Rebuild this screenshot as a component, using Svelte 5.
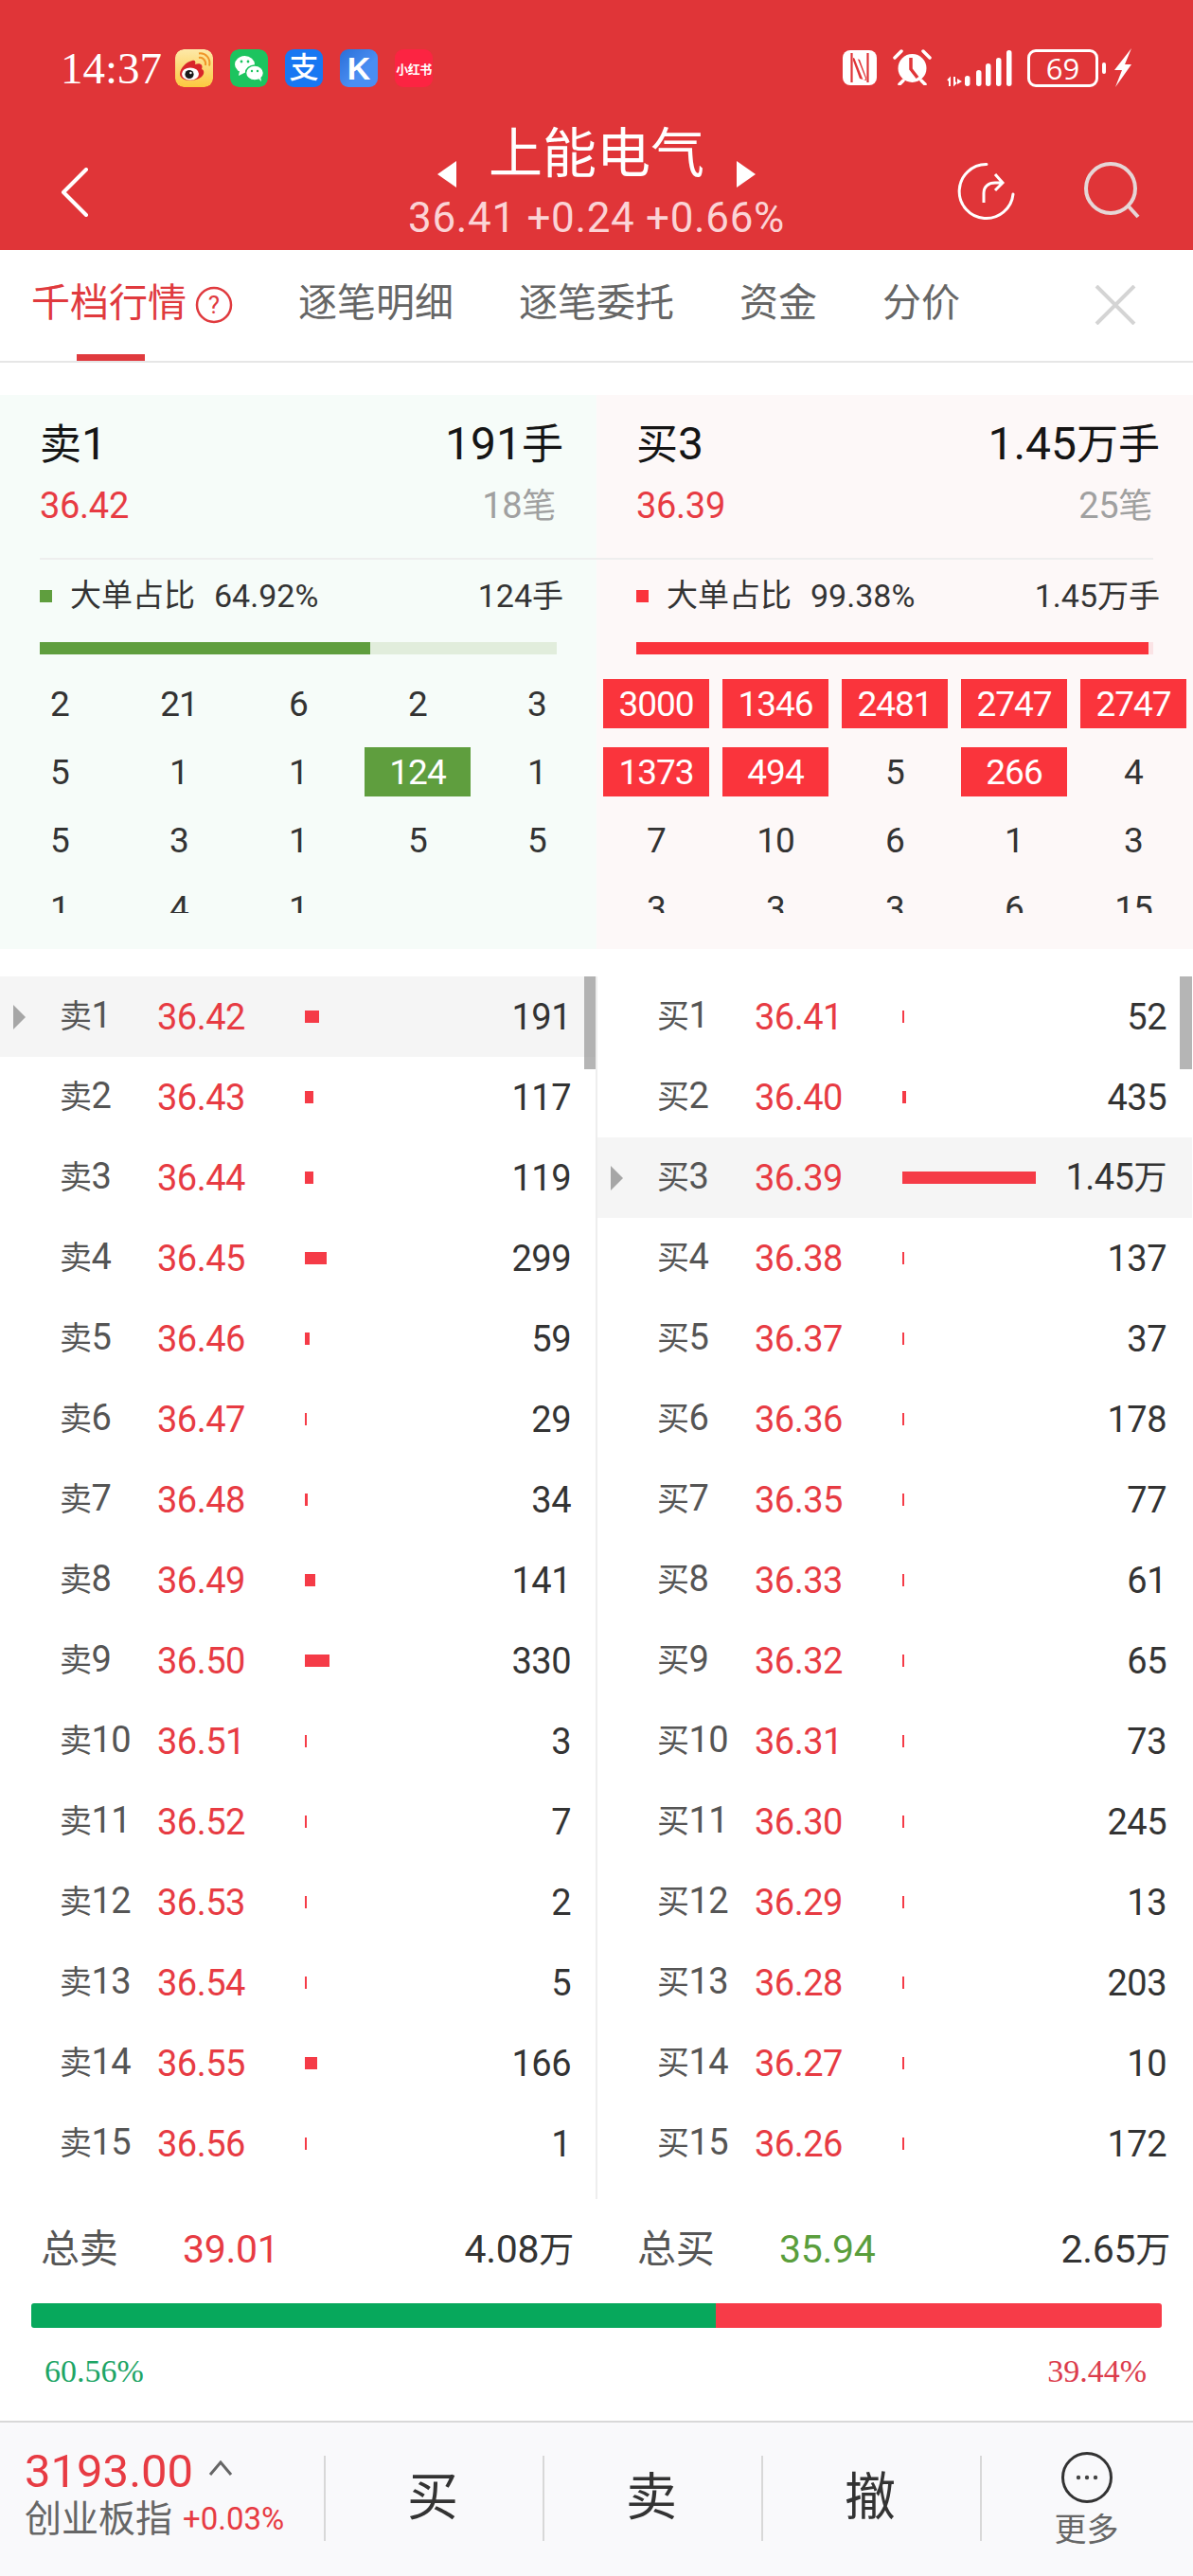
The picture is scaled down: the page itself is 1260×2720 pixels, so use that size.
<script>
  const prices = {
    sell: ['36.42', '36.43', '36.44', '36.45', '36.46', '36.47', '36.48', '36.49', '36.50', '36.51', '36.52', '36.53', '36.54', '36.55', '36.56'],
    buy: ['36.41', '36.40', '36.39', '36.38', '36.37', '36.36', '36.35', '36.33', '36.32', '36.31', '36.30', '36.29', '36.28', '36.27', '36.26']
  };
  const sellQty = [191, 117, 119, 299, 59, 29, 34, 141, 330, 3, 7, 2, 5, 166, 1];
  const buyQty = [52, 435, 14500, 137, 37, 178, 77, 61, 65, 73, 245, 13, 203, 10, 172];

  const fmt = q => (q >= 10000 ? (q / 10000).toFixed(2) + '万' : String(q));

  // digits are set a bit larger than the han characters next to them
  const parts = s => s.match(/[\u4e00-\u9fff]+|[^\u4e00-\u9fff]+/g);
  const isHan = t => /[\u4e00-\u9fff]/.test(t);

  const columns = [
    { label: '卖', rows: sellQty, px: prices.sell, active: 0, scale: 0.078 },
    { label: '买', rows: buyQty, px: prices.buy, active: 2, scale: 0.00972 }
  ];

  const panels = [
    {
      cls: 'sell', title: '卖1', hands: '191手', price: '36.42', count: '18笔',
      pct: '64.92%', big: '124手', fill: 64,
      cells: [2, 21, 6, 2, 3, 5, 1, 1, 124, 1, 5, 3, 1, 5, 5, 1, 4, 1],
      hot: [124]
    },
    {
      cls: 'buy', title: '买3', hands: '1.45万手', price: '36.39', count: '25笔',
      pct: '99.38%', big: '1.45万手', fill: 99.1,
      cells: [3000, 1346, 2481, 2747, 2747, 1373, 494, 5, 266, 4, 7, 10, 6, 1, 3, 3, 3, 3, 6, 15],
      hot: [3000, 1346, 2481, 2747, 1373, 494, 266]
    }
  ];

  const tabs = ['逐笔明细', '逐笔委托', '资金', '分价'];
</script>

{#snippet mix(s)}
  <span>{#each parts(s) as t}<span class:han={isHan(t)}>{t}</span>{/each}</span>
{/snippet}

<div class="page">
  <header class="top">
    <div class="status">
      <span class="time">14:37</span>
      <div class="apps">
        <svg class="app" viewBox="0 0 40 40">
          <defs>
            <linearGradient id="wb" x1="0" y1="0" x2="0" y2="1">
              <stop offset="0" stop-color="#fde9a8" />
              <stop offset="1" stop-color="#fcc93f" />
            </linearGradient>
          </defs>
          <rect width="40" height="40" rx="9" fill="url(#wb)" />
          <path d="M5 26c0-6 7-13 13-14 3-1 4 1 3 4 5-2 9 0 7 5 3 1 3 5 0 8-5 5-23 6-23-3z" fill="#d9262a" />
          <ellipse cx="16" cy="26" rx="9" ry="6.6" fill="#fff" />
          <circle cx="15" cy="26.5" r="4.6" fill="#1a1a1a" />
          <circle cx="16.4" cy="25" r="1.2" fill="#fff" />
          <path d="M25 9c4-1 8 3 7 8M25 4.500c7-1 13 5 11 13" fill="none" stroke="#f0962a" stroke-width="2" />
        </svg>
        <svg class="app" viewBox="0 0 40 40">
          <rect width="40" height="40" rx="9" fill="#1cc45f" />
          <ellipse cx="15.500" cy="16" rx="10.500" ry="9" fill="#fff" />
          <path d="M10 23l-1 5 6-3z" fill="#fff" />
          <ellipse cx="26" cy="25" rx="9.500" ry="8" fill="#fff" stroke="#1cc45f" stroke-width="1.500" />
          <path d="M30 31l3 3-1-6z" fill="#fff" />
          <circle cx="12" cy="13" r="1.400" fill="#1cc45f" />
          <circle cx="19" cy="13" r="1.400" fill="#1cc45f" />
          <circle cx="23" cy="23" r="1.200" fill="#1cc45f" />
          <circle cx="29" cy="23" r="1.200" fill="#1cc45f" />
        </svg>
        <span class="app pay">支</span>
        <span class="app kk">K</span>
        <span class="app xhs">小红书</span>
      </div>
      <div class="sys">
        <svg class="nfc" viewBox="0 0 36 37">
          <rect width="36" height="37" rx="8" fill="#fff" />
          <path d="M9.500 3v31M26.500 3v31" stroke="#e03538" stroke-width="2.200" />
          <path d="M11 8l7 2 7 19v3l-7-2-7-19z" fill="#e03538" />
          <path d="M13 6l10 25" stroke="#fff" stroke-width="3" />
        </svg>
        <svg class="alarm" viewBox="0 0 41 38">
          <circle cx="20.500" cy="20" r="15" fill="#fff" />
          <path d="M19 9v12l7 9" fill="none" stroke="#e03538" stroke-width="3.500" />
          <path d="M2 9l7-7M39 9l-7-7M7 37l4-4M34 37l-4-4" stroke="#fff" stroke-width="3.500" stroke-linecap="round" />
        </svg>
        <svg class="signal" viewBox="0 0 69 40">
          <path d="M3 39v-8l-2 2M8 29v8l2-2" fill="none" stroke="#fff" stroke-width="2" />
          <path d="M11 31l5 3-5 3z" fill="#fff" />
          <rect x="19" y="28" width="5.500" height="11" rx="2.700" fill="#fff" />
          <rect x="31" y="22" width="5.500" height="17" rx="2.700" fill="#fff" />
          <rect x="41" y="15" width="5.500" height="24" rx="2.700" fill="#fff" />
          <rect x="52" y="9" width="5.500" height="30" rx="2.700" fill="#fff" />
          <rect x="63" y="1" width="5.500" height="38" rx="2.700" fill="#fff" />
        </svg>
        <span class="battery">69</span>
        <span class="nub"></span>
        <svg class="bolt" viewBox="0 0 20 41">
          <path d="M19 0L1 23h8L2 41l17-24h-7z" fill="#fff" />
        </svg>
      </div>
    </div>
    <div class="nav">
      <svg class="back" viewBox="0 0 30 52">
        <path d="M27 2L3 26l24 24" fill="none" stroke="#fff" stroke-width="4" stroke-linecap="round" stroke-linejoin="round" />
      </svg>
      <div class="stock">
        <div class="name">
          <svg class="tri" viewBox="0 0 20 28"><path d="M20 0v28L0 14z" fill="#fff" /></svg>
          <span>上能电气</span>
          <svg class="tri" viewBox="0 0 20 28"><path d="M0 0v28l20-14z" fill="#fff" /></svg>
        </div>
        <div class="quote">36.41 +0.24 +0.66%</div>
      </div>
      <div class="actions">
        <svg class="share" viewBox="0 0 62 62">
          <path d="M32 2.500A28.500 28.500 0 1 0 60 34" fill="none" stroke="#fff" stroke-width="3" stroke-linecap="round" />
          <path d="M29 43V33c0-7 5-11 12-11h8M41 13l8 9-8 8" fill="none" stroke="#fff" stroke-width="3" />
        </svg>
        <svg class="search" viewBox="0 0 60 60">
          <circle cx="28" cy="28" r="26" fill="none" stroke="#e6d6d6" stroke-width="4" />
          <path d="M47 47l10 11" stroke="#e6d6d6" stroke-width="4" />
        </svg>
      </div>
    </div>
  </header>

  <nav class="tabs">
    <div class="tab active">
      <span>千档行情</span>
      <svg class="help" viewBox="0 0 40 40">
        <circle cx="20" cy="20" r="18" fill="none" stroke="#e03a3e" stroke-width="2.500" />
        <text x="20" y="29" text-anchor="middle" class="help-q">?</text>
      </svg>
      <i class="underline"></i>
    </div>
    {#each tabs as tab}
      <div class="tab">{tab}</div>
    {/each}
    <svg class="close" viewBox="0 0 44 42">
      <path d="M2 1l40 40M42 1L2 41" stroke="#d4d4d4" stroke-width="4" />
    </svg>
  </nav>

  <section class="panels">
    {#each panels as p}
      <div class="panel {p.cls}">
        <div class="head">
          <div class="line big">{@render mix(p.title)}{@render mix(p.hands)}</div>
          <div class="line mid"><span class="px">{p.price}</span><span class="count">{@render mix(p.count)}</span></div>
        </div>
        <div class="rule"></div>
        <div class="line small">
          <span class="ratio"><i class="dot"></i><span class="cap">大单占比</span><span>{p.pct}</span></span>
          {@render mix(p.big)}
        </div>
        <div class="track"><div class="fill" style="width: {p.fill}%"></div></div>
        <div class="cells">
          {#each p.cells as c}
            <span class="cell" class:hot={p.hot.includes(c)}>{c}</span>
          {/each}
        </div>
      </div>
    {/each}
  </section>

  <section class="book">
    {#each columns as col}
      <div class="col">
        {#each col.rows as q, i}
          <div class="row" class:on={i === col.active}>
            <span class="mark">{#if i === col.active}<svg viewBox="0 0 13 26"><path d="M0 0l13 13L0 26z" fill="#a6a6a6" /></svg>{/if}</span>
            <span class="lv"><span class="han">{col.label}</span>{i + 1}</span>
            <span class="pr">{col.px[i]}</span>
            <span class="vol"><i style="width: {Math.max(2, q * col.scale)}px"></i></span>
            <span class="qty">{@render mix(fmt(q))}</span>
          </div>
        {/each}
        <i class="scroll"></i>
      </div>
    {/each}
  </section>

  <section class="totals">
    <div class="sums">
      <div class="sum"><span class="k">总卖</span><span class="red">39.01</span><span class="v">{@render mix('4.08万')}</span></div>
      <div class="sum"><span class="k">总买</span><span class="green">35.94</span><span class="v">{@render mix('2.65万')}</span></div>
    </div>
    <div class="ratio-bar">
      <div class="g" style="width: 60.56%"></div>
      <div class="r"></div>
    </div>
    <div class="pcts"><span class="pg">60.56%</span><span class="pr2">39.44%</span></div>
  </section>

  <footer class="foot">
    <div class="index">
      <div class="ix-top"><span class="ix-val">3193.00</span>
        <svg class="caret" viewBox="0 0 26 16"><path d="M2 15L13 2l11 13" fill="none" stroke="#666" stroke-width="3" /></svg>
      </div>
      <div class="ix-sub"><span class="ix-name">创业板指</span><span class="ix-chg">+0.03%</span></div>
    </div>
    <i class="sep"></i>
    <div class="btn">买</div>
    <i class="sep"></i>
    <div class="btn">卖</div>
    <i class="sep"></i>
    <div class="btn">撤</div>
    <i class="sep"></i>
    <div class="more">
      <svg viewBox="0 0 54 54">
        <circle cx="27" cy="27" r="25.500" fill="none" stroke="#333" stroke-width="3" />
        <circle cx="18" cy="27" r="2.200" fill="#444" />
        <circle cx="27" cy="27" r="2.200" fill="#444" />
        <circle cx="36" cy="27" r="2.200" fill="#444" />
      </svg>
      <span>更多</span>
    </div>
  </footer>
</div>

<style>
  :global(body) {
    margin: 0;
    background: #fff;
  }

  .page {
    width: 1260px;
    height: 2720px;
    overflow: hidden;
    font-family: Roboto, "Noto Sans CJK SC", sans-serif;
    color: #333;
  }

  i {
    display: block;
  }

  .top {
    height: 264px;
    background: #e03538;
    color: #fff;
  }

  .status {
    height: 92px;
    padding: 52px 64px 0;
    box-sizing: border-box;
    display: flex;
    align-items: flex-start;
  }

  .time {
    font-family: "Liberation Serif", serif;
    font-size: 47px;
    line-height: 40px;
    width: 121px;
    flex: none;
  }

  .apps {
    display: flex;
    gap: 18px;
  }

  .app {
    width: 40px;
    height: 40px;
    flex: none;
    border-radius: 9px;
    display: flex;
    align-items: center;
    justify-content: center;
    color: #fff;
  }

  .pay {
    background: #1877f2;
    font-size: 31px;
    font-weight: 500;
    line-height: 40px;
  }

  .kk {
    background: linear-gradient(135deg, #2a6fd8 0%, #4a8ef2 60%);
    font-family: "Liberation Sans", sans-serif;
    font-size: 34px;
    font-weight: 700;
    line-height: 40px;
  }

  .xhs {
    background: #fc2442;
    font-size: 13px;
    font-weight: 700;
    white-space: nowrap;
    letter-spacing: -0.5px;
    overflow: hidden;
  }

  .sys {
    margin-left: auto;
    display: flex;
    align-items: flex-start;
  }

  .nfc {
    width: 36px;
    height: 37px;
    margin-top: 1px;
  }

  .alarm {
    width: 41px;
    height: 38px;
    margin-left: 17px;
  }

  .signal {
    width: 69px;
    height: 40px;
    margin-left: 16px;
  }

  .battery {
    width: 75px;
    height: 40px;
    margin-left: 16px;
    box-sizing: border-box;
    border: 3px solid #fff;
    border-radius: 9px;
    font-size: 31px;
    line-height: 34px;
    text-align: center;
    font-family: "Open Sans", sans-serif;
  }

  .nub {
    width: 4px;
    height: 12px;
    margin: 14px 0 0 4px;
    background: #fff;
    border-radius: 2px;
  }

  .bolt {
    width: 20px;
    height: 41px;
    margin-left: 8px;
    margin-top: -1px;
  }

  .nav {
    height: 172px;
    display: grid;
    grid-template-columns: 1fr auto 1fr;
    padding: 0 64px;
  }

  .back {
    width: 30px;
    height: 52px;
    margin-top: 85px;
  }

  .stock {
    padding-top: 41px;
    display: flex;
    flex-direction: column;
    align-items: center;
  }

  .name {
    display: flex;
    gap: 34px;
    align-items: flex-start;
    font-size: 57px;
    line-height: 60px;
    height: 60px;
  }

  .tri {
    width: 20px;
    height: 28px;
    margin-top: 37px;
  }

  .quote {
    margin-top: 17px;
    font-size: 44px;
    line-height: 40px;
    color: #fbd3d5;
    letter-spacing: 0.66px;
    white-space: nowrap;
  }

  .actions {
    display: flex;
    justify-content: flex-end;
    gap: 73px;
    padding-top: 79px;
    margin-right: -9px;
    align-items: flex-start;
  }

  .share {
    width: 62px;
    height: 62px;
  }

  .search {
    width: 60px;
    height: 60px;
  }

  .tabs {
    height: 119px;
    box-sizing: border-box;
    border-bottom: 2px solid #e6e6e6;
    padding-left: 33px;
    display: flex;
    gap: 69px;
    color: #666;
    font-size: 41px;
    line-height: 112px;
  }

  .tab {
    position: relative;
    display: flex;
    align-items: center;
    height: 112px;
  }

  .active {
    color: #e03a3e;
    gap: 9px;
  }

  .help {
    width: 40px;
    height: 40px;
    margin-top: 4px;
  }

  .help-q {
    font-size: 26px;
    fill: #e03a3e;
    font-family: Roboto, sans-serif;
  }

  .underline {
    position: absolute;
    left: 48px;
    bottom: -5px;
    width: 72px;
    height: 7px;
    background: #e03a3e;
  }

  .close {
    width: 44px;
    height: 42px;
    margin: 37px 60px 0 auto;
  }

  .panels {
    margin-top: 34px;
    height: 585px;
    display: flex;
  }

  .panel {
    width: 630px;
    box-sizing: border-box;
    padding-top: 25px;
  }

  .sell {
    background: #f6fcf9;
  }

  .buy {
    background: #fdf8f8;
  }

  .line {
    display: flex;
    justify-content: space-between;
    padding: 0 35px 0 42px;
    white-space: nowrap;
  }

  .big {
    font-size: 48px;
    line-height: 50px;
    height: 50px;
    padding-top: 2px;
    margin-bottom: -2px;
    color: #151515;
  }

  .big .han {
    font-size: 44px;
  }

  .mid {
    margin-top: 18px;
    font-size: 38px;
    line-height: 48px;
    height: 48px;
    letter-spacing: -0.3px;
    padding-right: 43px;
  }

  .mid .han {
    font-size: 36px;
  }

  .px {
    color: #e73b43;
  }

  .count {
    color: #a0a0a0;
  }

  .rule {
    height: 2px;
    margin-top: 31px;
    background: #eeeeee;
  }

  .sell .rule {
    margin-left: 42px;
  }

  .buy .rule {
    margin-right: 42px;
  }

  .small {
    margin-top: 18px;
    font-size: 34px;
    line-height: 40px;
    height: 40px;
  }

  .small .han {
    font-size: 33px;
  }

  .ratio {
    display: flex;
    align-items: center;
  }

  .dot {
    width: 13px;
    height: 13px;
    margin-right: 19px;
  }

  .cap {
    font-size: 33px;
    margin-right: 20px;
  }

  .sell .dot,
  .sell .fill {
    background: #5f9e3e;
  }

  .buy .dot,
  .buy .fill {
    background: #fa343c;
  }

  .track {
    height: 13px;
    width: 546px;
    margin: 29px 0 0 42px;
  }

  .sell .track {
    background: #e1eddc;
  }

  .buy .track {
    background: #fbe3e5;
  }

  .fill {
    height: 100%;
  }

  .cells {
    margin: 26px 0 0 7px;
    height: 247px;
    overflow: hidden;
    display: grid;
    grid-template-columns: repeat(5, 112px);
    grid-auto-rows: 52px;
    gap: 20px 14px;
    font-size: 37px;
    letter-spacing: -1px;
  }

  .cell {
    display: flex;
    align-items: center;
    justify-content: center;
  }

  .hot {
    color: #fff;
  }

  .sell .hot {
    background: #5f9e3e;
  }

  .buy .hot {
    background: #fa343c;
  }

  .book {
    margin-top: 29px;
    display: flex;
    height: 1291px;
  }

  .col {
    width: 630px;
    box-sizing: border-box;
    position: relative;
  }

  .col + .col {
    border-left: 2px solid #eeeeee;
    margin-left: -1px;
  }

  .row {
    height: 85px;
    display: grid;
    grid-template-columns: 63px 103px 155px 1fr auto;
    align-items: center;
    padding-right: 27px;
    font-size: 38px;
    letter-spacing: -0.5px;
  }

  .on {
    background: #f5f5f5;
  }

  .mark {
    padding-left: 14px;
    display: flex;
  }

  .mark svg {
    width: 13px;
    height: 26px;
  }

  .lv {
    height: 52px;
    line-height: 52px;
    margin-top: -3px;
    color: #555;
    white-space: nowrap;
  }

  .lv .han {
    font-size: 34px;
  }

  .pr {
    color: #e73b43;
  }

  .vol {
    margin-left: 1px;
  }

  .vol i {
    height: 13px;
    background: #f53b47;
  }

  .qty {
    color: #333;
    line-height: 52px;
  }

  .qty .han {
    font-size: 35px;
  }

  .scroll {
    position: absolute;
    top: 0;
    right: 0;
    width: 13px;
    height: 98px;
    background: rgba(150, 150, 150, 0.7);
  }

  .totals {
    height: 234px;
    box-sizing: border-box;
    padding-top: 33px;
  }

  .sums {
    display: flex;
  }

  .sum {
    width: 630px;
    box-sizing: border-box;
    padding: 0 24px 0 43px;
    display: grid;
    grid-template-columns: 150px 1fr auto;
    line-height: 40px;
    height: 40px;
    font-size: 41px;
    letter-spacing: -0.3px;
  }

  .k {
    font-size: 41px;
    color: #555;
  }

  .red {
    color: #e73b43;
  }

  .green {
    color: #5a9e3c;
  }

  .v {
    color: #333;
  }

  .v .han {
    font-size: 37px;
  }

  .ratio-bar {
    margin: 37px 33px 0;
    height: 26px;
    display: flex;
    border-radius: 3px;
    overflow: hidden;
  }

  .g {
    background: #07a85c;
  }

  .r {
    flex: 1;
    background: #f73b48;
  }

  .pcts {
    margin-top: 26px;
    padding: 0 49px 0 47px;
    display: flex;
    justify-content: space-between;
    font-family: "Liberation Serif", serif;
    font-size: 34px;
    line-height: 40px;
  }

  .pg {
    color: #1ea566;
  }

  .pr2 {
    color: #dc3c4c;
  }

  .foot {
    height: 164px;
    box-sizing: border-box;
    border-top: 2px solid #d8d8d8;
    background: #f9f9fb;
    padding-top: 35px;
    display: flex;
    align-items: flex-start;
  }

  .index {
    width: 342px;
    flex: none;
    box-sizing: border-box;
    padding-left: 26px;
    margin-top: -8px;
    white-space: nowrap;
  }

  .ix-top {
    display: flex;
    align-items: flex-start;
    height: 52px;
  }

  .ix-val {
    font-size: 49px;
    line-height: 50px;
    color: #e73b43;
  }

  .caret {
    width: 26px;
    height: 16px;
    margin: 13px 0 0 16px;
  }

  .ix-sub {
    display: flex;
    align-items: center;
    gap: 11px;
    line-height: 46px;
  }

  .ix-name {
    font-size: 39px;
    color: #666;
  }

  .ix-chg {
    font-size: 33px;
    color: #e73b43;
  }

  .sep {
    width: 2px;
    height: 90px;
    flex: none;
    background: #d8d8d8;
  }

  .btn {
    width: 229px;
    height: 90px;
    flex: none;
    box-sizing: border-box;
    padding-right: 3px;
    text-align: center;
    font-size: 54px;
    line-height: 90px;
    color: #333;
  }

  .more {
    flex: 1;
    margin-top: -4px;
    padding-right: 2px;
    display: flex;
    flex-direction: column;
    align-items: center;
    color: #666;
    font-size: 34px;
    line-height: 44px;
  }

  .more svg {
    width: 54px;
    height: 54px;
    margin-bottom: 6px;
  }
</style>
